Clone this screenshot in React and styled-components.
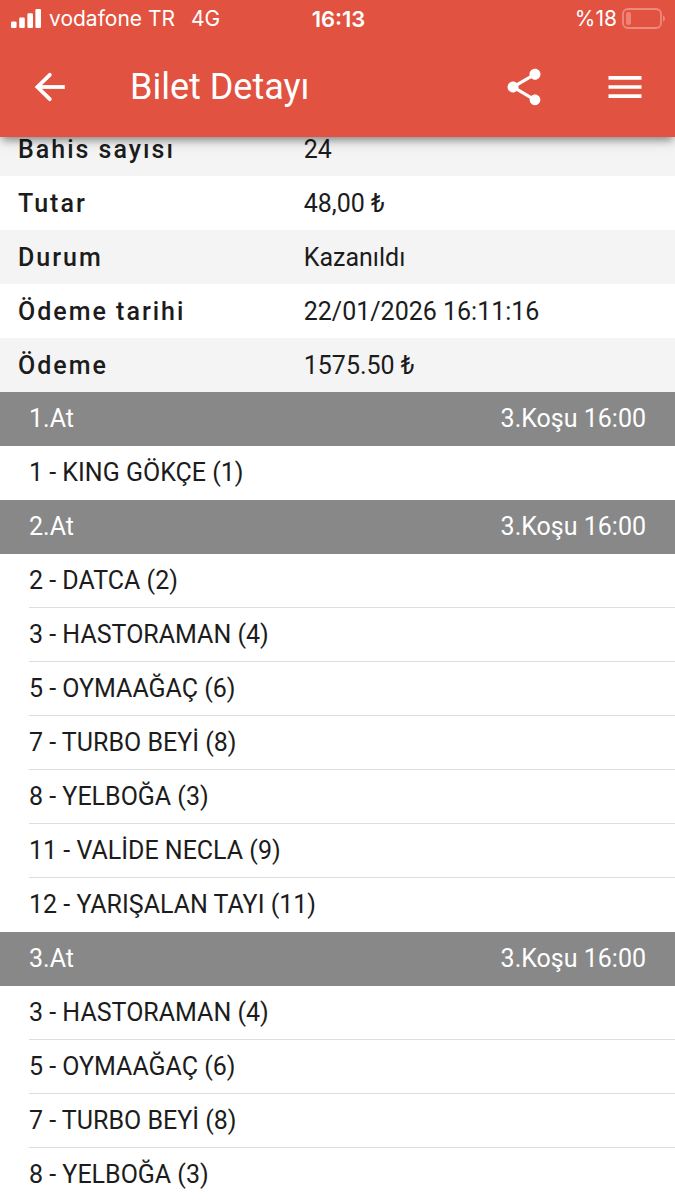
import React from 'react';
import styled, { createGlobalStyle } from 'styled-components';
import { MdMenu, MdShare } from 'react-icons/md';

const colors = {
  primary: '#e15241',
  stripe: '#f4f4f4',
  divider: '#888888',
  line: '#dedede',
  text: '#1c1c1c',
};

const GlobalStyle = createGlobalStyle`
  * { box-sizing: border-box; }
  body {
    margin: 0;
    background: #fff;
    color: ${colors.text};
    font-family: Roboto, "Liberation Sans", sans-serif;
    font-size: 25px;
    line-height: 30px;
  }
`;

const Page = styled.div`
  display: flex;
  flex-direction: column;
  height: 100vh;
`;

const Header = styled.header`
  position: relative;
  z-index: 1;
  flex: none;
  background: ${colors.primary};
  color: #fff;
  box-shadow: 0 5px 8px -2px rgba(0, 0, 0, 0.4), 0 4px 16px rgba(0, 0, 0, 0.1);
`;

const StatusBar = styled.div`
  display: grid;
  grid-template-columns: 1fr auto 1fr;
  align-items: center;
  height: 37px;
  padding: 0 9px 0 11px;
  font-family: Inter, sans-serif;
  font-size: 21px;
`;

const StatusGroup = styled.div`
  display: flex;
  align-items: center;
  justify-content: ${props => (props.$end ? 'flex-end' : 'flex-start')};
  gap: ${props => (props.$end ? 5 : 8)}px;
`;

const Network = styled.span`
  margin-left: 8px;
`;

const Clock = styled.span`
  font-size: 22px;
  font-weight: 600;
`;

const Toolbar = styled.div`
  display: flex;
  align-items: center;
  height: 100px;
  padding: 0 22px 1px;
`;

const IconButton = styled.button`
  display: flex;
  align-items: center;
  justify-content: center;
  width: 56px;
  height: 56px;
  padding: 0;
  border: 0;
  background: none;
  color: inherit;
  cursor: pointer;
`;

const Title = styled.h1`
  flex: 1;
  margin: 0 0 0 52px;
  font-size: 36px;
  font-weight: 400;
  line-height: 44px;
`;

const Actions = styled.div`
  display: flex;
  gap: 45px;
`;

const Content = styled.main`
  flex: 1;
  min-height: 0;
  margin-top: -15px;
  overflow-y: auto;
  scrollbar-width: none;
`;

const Summary = styled.table`
  width: 100%;
  border-collapse: collapse;
  table-layout: fixed;
`;

const SummaryRow = styled.tr`
  height: 54px;

  &:nth-child(odd) { background: ${colors.stripe}; }
`;

const Label = styled.th`
  width: 45%;
  padding: 2px 0 0 18px;
  font-weight: 500;
  letter-spacing: 2px;
  text-align: left;
`;

const Value = styled.td`
  padding: 2px 0 0;
`;

const LegHeader = styled.h2`
  display: flex;
  align-items: center;
  justify-content: space-between;
  height: 54px;
  margin: 0;
  padding: 0 29px;
  background: ${colors.divider};
  color: #fff;
  font-size: inherit;
  font-weight: 400;
`;

const Horses = styled.ul`
  margin: 0;
  padding: 0 0 0 29px;
  list-style: none;
`;

const Horse = styled.li`
  display: flex;
  align-items: center;
  height: 54px;
  border-bottom: 1px solid ${colors.line};

  &:last-child { border-color: transparent; }
`;

const summary = [
  ['Bahis sayısı', '24'],
  ['Tutar', '48,00 ₺'],
  ['Durum', 'Kazanıldı'],
  ['Ödeme tarihi', '22/01/2026 16:11:16'],
  ['Ödeme', '1575.50 ₺'],
];

const legs = [
  { title: '1.At', race: '3.Koşu 16:00', horses: ['1 - KING GÖKÇE (1)'] },
  {
    title: '2.At',
    race: '3.Koşu 16:00',
    horses: [
      '2 - DATCA (2)',
      '3 - HASTORAMAN (4)',
      '5 - OYMAAĞAÇ (6)',
      '7 - TURBO BEYİ (8)',
      '8 - YELBOĞA (3)',
      '11 - VALİDE NECLA (9)',
      '12 - YARIŞALAN TAYI (11)',
    ],
  },
  {
    title: '3.At',
    race: '3.Koşu 16:00',
    horses: [
      '3 - HASTORAMAN (4)',
      '5 - OYMAAĞAÇ (6)',
      '7 - TURBO BEYİ (8)',
      '8 - YELBOĞA (3)',
    ],
  },
];

const Signal = () => (
  <svg width="30" height="20" viewBox="0 0 30 20" fill="currentColor" aria-hidden="true">
    <rect x="0" y="12.5" width="5.6" height="6.5" rx="1.3" />
    <rect x="8.2" y="8.5" width="5.6" height="10.5" rx="1.3" />
    <rect x="16.4" y="4.3" width="5.6" height="14.7" rx="1.3" />
    <rect x="24.4" y="0" width="5.6" height="19" rx="1.3" />
  </svg>
);

const Battery = () => (
  <svg width="44" height="22" viewBox="0 0 44 22" aria-hidden="true">
    <rect x="1" y="1" width="38" height="19" rx="5" fill="none" stroke="#f0897d" strokeWidth="1.8" />
    <rect x="4" y="4" width="5" height="13" rx="2" fill="#ee8276" />
    <path d="M41 7.5c2.6 1 2.6 5 0 6z" fill="#f0897d" />
  </svg>
);

const BackArrow = () => (
  <svg width="44" height="44" viewBox="0 0 44 44" fill="none" stroke="currentColor" aria-hidden="true">
    <path d="M21.8 9.8 9.4 22l12.4 12.2" strokeWidth="3.8" strokeLinecap="round" />
    <path d="M9.4 22h27.4" strokeWidth="3.8" />
  </svg>
);

export default function App() {
  return (
    <Page>
      <GlobalStyle />
      <Header>
        <StatusBar>
          <StatusGroup>
            <Signal />
            <span>vodafone TR</span>
            <Network>4G</Network>
          </StatusGroup>
          <Clock>16:13</Clock>
          <StatusGroup $end>
            <span>%18</span>
            <Battery />
          </StatusGroup>
        </StatusBar>
        <Toolbar>
          <IconButton aria-label="Geri"><BackArrow /></IconButton>
          <Title>Bilet Detayı</Title>
          <Actions>
            <IconButton aria-label="Paylaş"><MdShare size={44} /></IconButton>
            <IconButton aria-label="Menü"><MdMenu size={44} /></IconButton>
          </Actions>
        </Toolbar>
      </Header>
      <Content>
        <Summary>
          <tbody>
            {summary.map(([label, value]) => (
              <SummaryRow key={label}>
                <Label scope="row">{label}</Label>
                <Value>{value}</Value>
              </SummaryRow>
            ))}
          </tbody>
        </Summary>
        {legs.map(leg => (
          <section key={leg.title}>
            <LegHeader>
              <span>{leg.title}</span>
              <span>{leg.race}</span>
            </LegHeader>
            <Horses>
              {leg.horses.map(horse => <Horse key={horse}>{horse}</Horse>)}
            </Horses>
          </section>
        ))}
      </Content>
    </Page>
  );
}
